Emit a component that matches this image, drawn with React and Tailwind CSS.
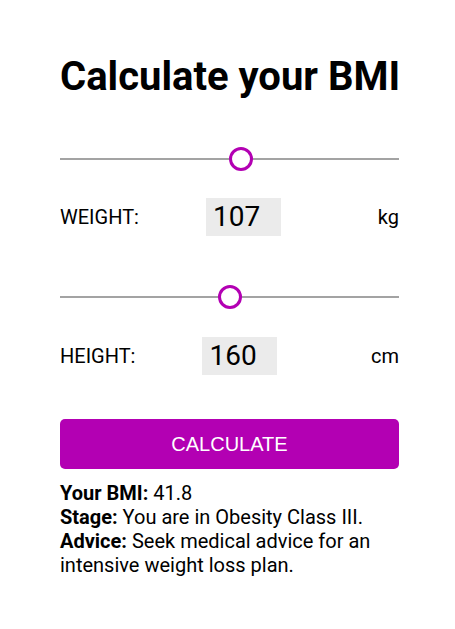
import React, { useState } from "react";

// BMI calculator card: two sliders, value boxes, calculate button, result text
const Slider = ({ value, min, max }) => {
  const pct = ((value - min) / (max - min)) * 100;
  return (
    <div className="relative h-6 flex items-center">
      <div className="w-full h-[2px] bg-[#a3a3a3]" />
      <div
        className="absolute top-0 w-6 h-6 -ml-3 rounded-full border-[3px] border-[#b300b3] bg-white"
        style={{ left: `calc(12px + (100% - 24px) * ${pct / 100})` }}
      />
    </div>
  );
};

const Row = ({ label, value, unit }) => (
  <div className="flex items-center">
    <span className="text-[20px] text-black">{label}</span>
    <div className="ml-[67px] w-[75px] h-[38px] bg-[#ebebeb] pl-[7px] flex items-center text-[28px] text-black">
      {value}
    </div>
    <span className="ml-auto text-[20px] text-black">{unit}</span>
  </div>
);

const App = () => {
  const [weight] = useState(107);
  const [height] = useState(160);

  return (
    <div
      className="min-h-screen bg-white pl-[60px]"
      style={{ fontFamily: "Roboto, 'Liberation Sans', sans-serif" }}
    >
      <div className="w-[339px] pt-[53px]">
        <h1 className="text-[40px] font-bold text-black leading-[48px] text-center whitespace-nowrap">
          Calculate your BMI
        </h1>

        <div className="mt-[46px]">
          <Slider value={weight} min={0} max={200} />
        </div>
        <div className="mt-[27px]">
          <Row label="WEIGHT:" value={weight} unit="kg" />
        </div>

        <div className="mt-[49px]">
          <Slider value={height} min={100} max={220} />
        </div>
        <div className="mt-[28px]">
          <Row label="HEIGHT:" value={height} unit="cm" />
        </div>

        <button
          className="mt-[44px] w-full h-[50px] rounded-[5px] bg-[#b300b3] text-white text-[20px] uppercase"
          style={{ fontFamily: "'Liberation Sans', Arial, sans-serif" }}
        >
          Calculate
        </button>

        <div className="mt-[12px] text-[20px] leading-[24px] text-black">
          <p>
            <b>Your BMI:</b> 41.8
          </p>
          <p>
            <b>Stage:</b> You are in Obesity Class III.
          </p>
          <p>
            <b>Advice:</b> Seek medical advice for an intensive weight loss plan.
          </p>
        </div>
      </div>
    </div>
  );
};

export default App;
